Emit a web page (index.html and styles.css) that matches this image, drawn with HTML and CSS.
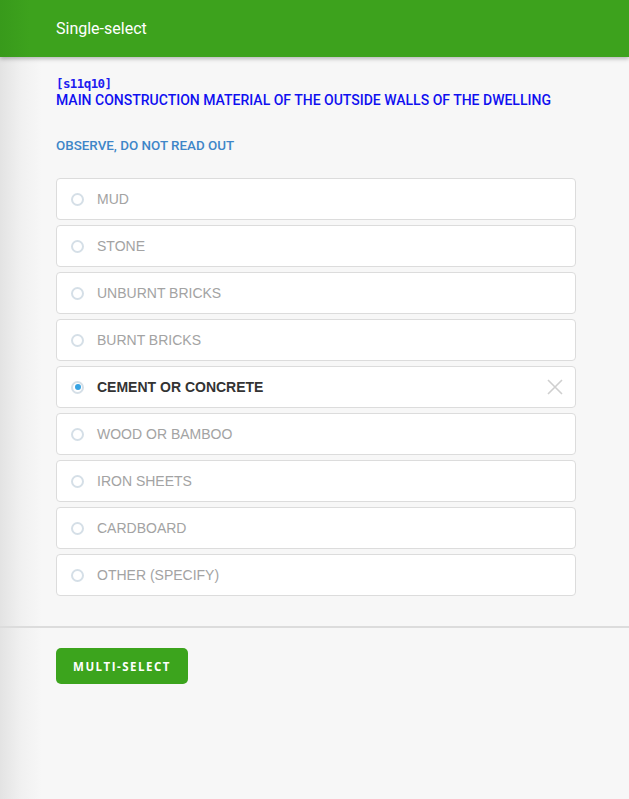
FILE: index.html
```html
<!DOCTYPE html>
<html>
<head>
<meta charset="utf-8">
<link rel="stylesheet" href="styles.css">
</head>
<body>
<header class="topbar"><span class="title">Single-select</span></header>
<main class="content">
  <div class="qid">[s11q10]</div>
  <div class="qtext">MAIN CONSTRUCTION MATERIAL OF THE OUTSIDE WALLS OF THE DWELLING</div>
  <div class="instr">OBSERVE, DO NOT READ OUT</div>
  <ul class="options">
    <li class="opt"><span class="radio"></span><span class="label">MUD</span></li>
    <li class="opt"><span class="radio"></span><span class="label">STONE</span></li>
    <li class="opt"><span class="radio"></span><span class="label">UNBURNT BRICKS</span></li>
    <li class="opt"><span class="radio"></span><span class="label">BURNT BRICKS</span></li>
    <li class="opt selected"><span class="radio"></span><span class="label">CEMENT OR CONCRETE</span>
      <svg class="clear" width="16" height="16" viewBox="0 0 16 16"><path d="M1 1 L15 15 M15 1 L1 15" stroke="#cfcfcf" stroke-width="1.6" fill="none"/></svg>
    </li>
    <li class="opt"><span class="radio"></span><span class="label">WOOD OR BAMBOO</span></li>
    <li class="opt"><span class="radio"></span><span class="label">IRON SHEETS</span></li>
    <li class="opt"><span class="radio"></span><span class="label">CARDBOARD</span></li>
    <li class="opt"><span class="radio"></span><span class="label">OTHER (SPECIFY)</span></li>
  </ul>
</main>
<div class="divider"></div>
<div class="actions"><button class="btn">MULTI-SELECT</button></div>
</body>
</html>
```
FILE: styles.css
```css
html, body { margin: 0; padding: 0; }
body {
  min-height: 799px;
  background: linear-gradient(to right, #e3e3e3 0px, #f1f1f1 22px, #f7f7f7 42px);
  font-family: Roboto, "Liberation Sans", sans-serif;
}
.topbar {
  height: 57px;
  background: linear-gradient(to right, #389a1b 0px, #3da21d 30px);
  box-shadow: 0 2px 4px rgba(0,0,0,0.25);
  display: flex;
  align-items: center;
  padding-left: 56px;
  position: relative;
}
.title { color: #fff; font-size: 16px; font-weight: 400; font-family: Roboto, sans-serif; }
.content { padding: 19px 53px 0 56px; }
.qid {
  font-family: "DejaVu Sans Mono", monospace;
  font-weight: bold;
  font-size: 12.5px;
  letter-spacing: -0.6px;
  line-height: 16px;
  color: #1d1df0;
}
.qtext {
  font-family: Roboto, sans-serif;
  font-weight: 500;
  font-size: 14px;
  line-height: 16px;
  color: #1010f0;
}
.instr {
  margin-top: 30px;
  font-family: Roboto, sans-serif;
  font-weight: 500;
  font-size: 13.4px;
  line-height: 16px;
  color: #3e86c8;
}
.options {
  list-style: none;
  margin: 24px 0 0;
  padding: 0;
  display: flex;
  flex-direction: column;
  gap: 5px;
}
.opt {
  height: 40px;
  border: 1px solid #dcdcdc;
  border-radius: 4px;
  background: #fff;
  display: flex;
  align-items: center;
  padding-left: 14px;
  padding-right: 12px;
}
.radio {
  width: 9px; height: 9px;
  border: 2px solid #d5dfe7;
  border-radius: 50%;
  position: relative;
  flex: none;
}
.selected .radio::after {
  content: "";
  position: absolute;
  left: 1.5px; top: 1.5px;
  width: 6px; height: 6px;
  border-radius: 50%;
  background: #36a3e3;
}
.label {
  margin-left: 13px;
  font-family: "Liberation Sans", Arial, sans-serif;
  font-size: 14px;
  color: #a3a3a3;
}
.selected .label { color: #333; font-weight: bold; }
.clear { margin-left: auto; }
.divider {
  margin-top: 30px;
  height: 2px;
  background: #dcdcdc;
}
.actions { padding: 20px 0 0 56px; }
.btn {
  width: 132px;
  height: 36px;
  border: none;
  border-radius: 5px;
  background: #3ca41d;
  color: #fff;
  font-family: "Open Sans", sans-serif;
  font-weight: bold;
  font-size: 11.5px;
  letter-spacing: 1.5px;
  padding: 0;
}
```
